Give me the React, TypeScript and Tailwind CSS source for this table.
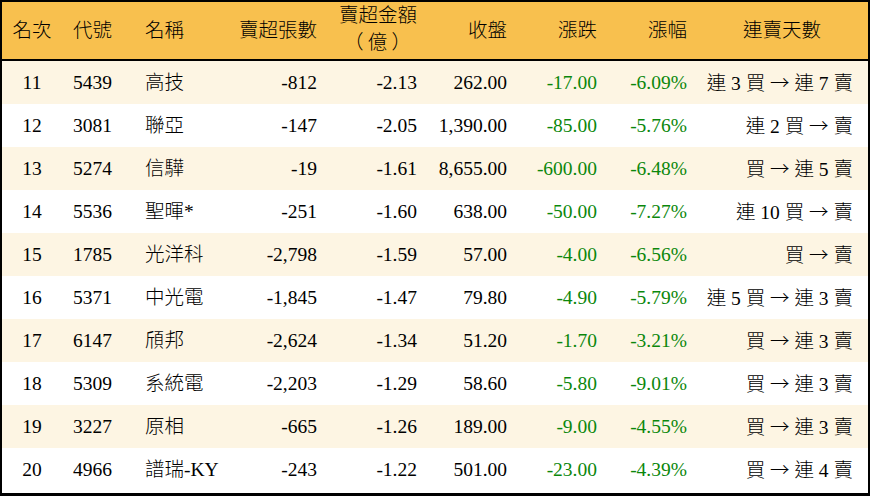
const rows = [
  ["11", "5439", "高技", "-812", "-2.13", "262.00", "-17.00", "-6.09%", "連 3 買 → 連 7 賣"],
  ["12", "3081", "聯亞", "-147", "-2.05", "1,390.00", "-85.00", "-5.76%", "連 2 買 → 賣"],
  ["13", "5274", "信驊", "-19", "-1.61", "8,655.00", "-600.00", "-6.48%", "買 → 連 5 賣"],
  ["14", "5536", "聖暉*", "-251", "-1.60", "638.00", "-50.00", "-7.27%", "連 10 買 → 賣"],
  ["15", "1785", "光洋科", "-2,798", "-1.59", "57.00", "-4.00", "-6.56%", "買 → 賣"],
  ["16", "5371", "中光電", "-1,845", "-1.47", "79.80", "-4.90", "-5.79%", "連 5 買 → 連 3 賣"],
  ["17", "6147", "頎邦", "-2,624", "-1.34", "51.20", "-1.70", "-3.21%", "買 → 連 3 賣"],
  ["18", "5309", "系統電", "-2,203", "-1.29", "58.60", "-5.80", "-9.01%", "買 → 連 3 賣"],
  ["19", "3227", "原相", "-665", "-1.26", "189.00", "-9.00", "-4.55%", "買 → 連 3 賣"],
  ["20", "4966", "譜瑞-KY", "-243", "-1.22", "501.00", "-23.00", "-4.39%", "買 → 連 4 賣"],
];

const cols = "grid grid-cols-[60px_73px_95px_87px_100px_90px_90px_90px_166px] pr-[15px] items-center";

// the arrow in the streak text is a full-width one
function Streak({ text }: { text: string }) {
  const [a, b] = text.split("→");
  return (
    <>
      {a}
      <span className="font-['Noto_Sans_CJK_TC'] font-light">→</span>
      {b}
    </>
  );
}

export default function App() {
  return (
    <div className="w-[870px] h-[496px] bg-white font-['Liberation_Serif','Noto_Sans_CJK_TC',serif] text-[19.5px] text-black">
      <div className="w-full h-full border-2 border-b-[3px] border-black flex flex-col">
        {/* header */}
        <div className={`${cols} h-[59px] bg-[#f8c04e] border-b-2 border-black shrink-0 font-light`}>
          <div className="text-center">名次</div>
          <div className="pl-[11px]">代號</div>
          <div className="pl-[10px]">名稱</div>
          <div className="text-right">賣超張數</div>
          <div className="text-right leading-[25px] pb-[6px]">
            <div>賣超金額</div>
            <div className="font-['Noto_Sans_CJK_TC'] pr-[6px]">（ 億 ）</div>
          </div>
          <div className="text-right">收盤</div>
          <div className="text-right">漲跌</div>
          <div className="text-right">漲幅</div>
          <div className="pl-[56px]">連賣天數</div>
        </div>

        {rows.map((r, i) => (
          <div
            key={r[0]}
            className={`${cols} h-[43px] shrink-0 whitespace-nowrap ${i % 2 === 0 ? "bg-[#fdf5e3]" : "bg-white"}`}
          >
            <div className="text-center">{r[0]}</div>
            <div className="pl-[11px]">{r[1]}</div>
            <div className="pl-[10px] font-light">{r[2]}</div>
            <div className="text-right">{r[3]}</div>
            <div className="text-right">{r[4]}</div>
            <div className="text-right">{r[5]}</div>
            <div className="text-right text-[#0b870b]">{r[6]}</div>
            <div className="text-right text-[#0b870b]">{r[7]}</div>
            <div className="text-right whitespace-pre font-light">
              <Streak text={r[8]} />
            </div>
          </div>
        ))}
      </div>
    </div>
  );
}
